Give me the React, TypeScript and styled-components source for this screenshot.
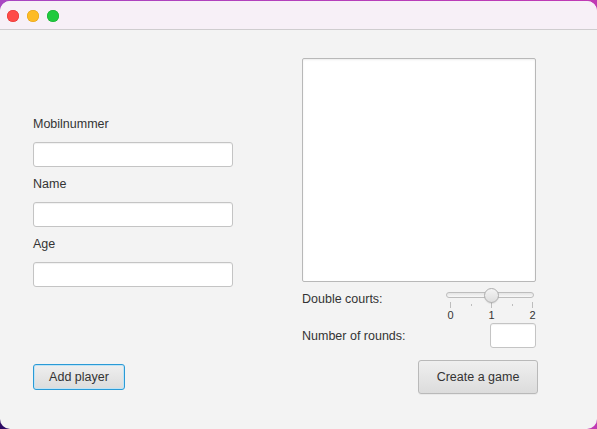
import React from "react";
import styled, { createGlobalStyle } from "styled-components";

const Global = createGlobalStyle`
  html, body { margin: 0; padding: 0; width: 597px; height: 429px; overflow: hidden; }
  body {
    background: #a846c2;
    font-family: "Liberation Sans", Arial, sans-serif;
  }
  #root { width: 597px; height: 429px; }
`;

const Desktop = styled.div`
  width: 597px;
  height: 429px;
  padding-top: 1px;
  box-sizing: border-box;
  background: radial-gradient(circle at 0% 100%, #2c0a62 0%, #3a0f70 4%, transparent 6%),
    linear-gradient(90deg, #a846c2 0%, #c03ab4 100%);
`;

const Window = styled.div`
  width: 597px;
  height: 428px;
  border-radius: 10px;
  overflow: hidden;
  display: flex;
  flex-direction: column;
  background: #f3f3f3;
`;

const TitleBar = styled.div`
  height: 28px;
  flex: 0 0 28px;
  background: #f7f0f7;
  border-bottom: 1px solid #cfcdcf;
  display: flex;
  align-items: center;
  padding-left: 7px;
  gap: 8px;
`;

const Light = styled.span<{ $c: string; $b: string }>`
  width: 12px;
  height: 12px;
  border-radius: 50%;
  background: ${(p) => p.$c};
  box-shadow: inset 0 0 0 0.5px ${(p) => p.$b};
  margin-top: 1px;
`;

const Content = styled.div`
  flex: 1;
  display: flex;
  flex-direction: column;
  padding: 28px 59px 0 33px;
  color: #333;
  font-size: 12.5px;
`;

const TopArea = styled.div`
  display: flex;
  gap: 69px;
`;

const Fields = styled.div`
  width: 200px;
  margin-top: 58px;
  display: flex;
  flex-direction: column;
  gap: 9px;
`;

const Field = styled.div`
  display: flex;
  flex-direction: column;
  gap: 10px;
`;

const Label = styled.label`
  display: block;
  line-height: 16px;
  height: 16px;
  font-size: 12.5px;
  color: #333;
  white-space: nowrap;
`;

const Input = styled.input<{ $w?: number }>`
  box-sizing: border-box;
  width: ${(p) => p.$w ?? 200}px;
  height: 25px;
  margin: 0;
  border: 1px solid #c4c4c4;
  border-radius: 3px;
  background: #fff;
  box-shadow: inset 0 1px 1px rgba(0, 0, 0, 0.06);
  outline: none;
  padding: 0 6px;
  font-family: inherit;
  font-size: 12.5px;
`;

const RightCol = styled.div`
  width: 236px;
  display: flex;
  flex-direction: column;
`;

const ListView = styled.div`
  box-sizing: border-box;
  width: 234px;
  height: 224px;
  background: #fff;
  border: 1px solid #b8b8b8;
  border-radius: 2px;
  box-shadow: inset 0 1px 2px rgba(0, 0, 0, 0.08);
`;

const SliderRow = styled.div`
  width: 234px;
  display: flex;
  justify-content: space-between;
  align-items: flex-start;
  margin-top: 6px;
  height: 35px;
`;

const SliderLabel = styled(Label)`
  margin-top: 3px;
`;

const Slider = styled.div`
  position: relative;
  width: 94px;
  height: 35px;
`;

const Track = styled.div`
  position: absolute;
  left: 4px;
  right: 2px;
  top: 4px;
  height: 6px;
  box-sizing: border-box;
  border-radius: 3px;
  border: 1px solid #bdbdbd;
  background: linear-gradient(#e4e4e4, #f8f8f8);
`;

const Thumb = styled.div`
  position: absolute;
  top: 0;
  width: 15px;
  height: 15px;
  box-sizing: border-box;
  border-radius: 50%;
  border: 1px solid #aeaeae;
  background: linear-gradient(#f4f4f4, #dedede);
  box-shadow: 0 1px 1px rgba(0, 0, 0, 0.08);
`;

const Tick = styled.div<{ $major: boolean }>`
  position: absolute;
  width: 1px;
  top: ${(p) => (p.$major ? 14 : 16)}px;
  height: ${(p) => (p.$major ? 6 : 2)}px;
  background: #bdbdbd;
`;

const TickLabel = styled.span`
  position: absolute;
  top: 20px;
  width: 10px;
  margin-left: -5px;
  text-align: center;
  font-size: 11px;
  line-height: 14px;
  color: #333;
`;

const RoundsRow = styled.div`
  width: 234px;
  display: flex;
  justify-content: space-between;
  align-items: center;
  height: 25px;
`;

const BottomBar = styled.div`
  display: flex;
  justify-content: space-between;
  align-items: center;
  margin-top: 12px;
`;

const Button = styled.button<{ $focused?: boolean; $w: number; $h: number }>`
  box-sizing: border-box;
  width: ${(p) => p.$w}px;
  height: ${(p) => p.$h}px;
  margin: 0;
  padding: 0;
  border-radius: 3px;
  border: 1px solid ${(p) => (p.$focused ? "#2a9ad6" : "#b9b9b9")};
  box-shadow: ${(p) =>
    p.$focused ? "inset 0 0 0 1px #bfe3f5" : "0 1px 0 rgba(0,0,0,0.04)"};
  background: linear-gradient(#efefef, #dcdcdc);
  color: #333;
  font-family: "Liberation Sans", Arial, sans-serif;
  font-size: 12.5px;
`;

const ticks = [
  { x: 8, major: true, label: "0" },
  { x: 28.5, major: false },
  { x: 49, major: true, label: "1" },
  { x: 69.5, major: false },
  { x: 90, major: true, label: "2" },
];

export default function App() {
  return (
    <>
      <Global />
      <Desktop>
        <Window>
          <TitleBar>
            <Light $c="#fe4a47" $b="#e0302e" />
            <Light $c="#fdbb25" $b="#e09e10" />
            <Light $c="#1fca3e" $b="#14a82c" />
          </TitleBar>
          <Content>
            <TopArea>
              <Fields>
                <Field>
                  <Label>Mobilnummer</Label>
                  <Input />
                </Field>
                <Field>
                  <Label>Name</Label>
                  <Input />
                </Field>
                <Field>
                  <Label>Age</Label>
                  <Input />
                </Field>
              </Fields>
              <RightCol>
                <ListView />
                <SliderRow>
                  <SliderLabel>Double courts:</SliderLabel>
                  <Slider>
                    <Track />
                    {ticks.map((t, i) => (
                      <React.Fragment key={i}>
                        <Tick $major={t.major} style={{ left: t.x }} />
                        {t.label && <TickLabel style={{ left: t.x + 0.5 }}>{t.label}</TickLabel>}
                      </React.Fragment>
                    ))}
                    <Thumb style={{ left: 49 - 7 }} />
                  </Slider>
                </SliderRow>
                <RoundsRow>
                  <Label>Number of rounds:</Label>
                  <Input $w={46} />
                </RoundsRow>
              </RightCol>
            </TopArea>
            <BottomBar>
              <Button $focused $w={92} $h={26}>Add player</Button>
              <Button $w={120} $h={34}>Create a game</Button>
            </BottomBar>
          </Content>
        </Window>
      </Desktop>
    </>
  );
}
